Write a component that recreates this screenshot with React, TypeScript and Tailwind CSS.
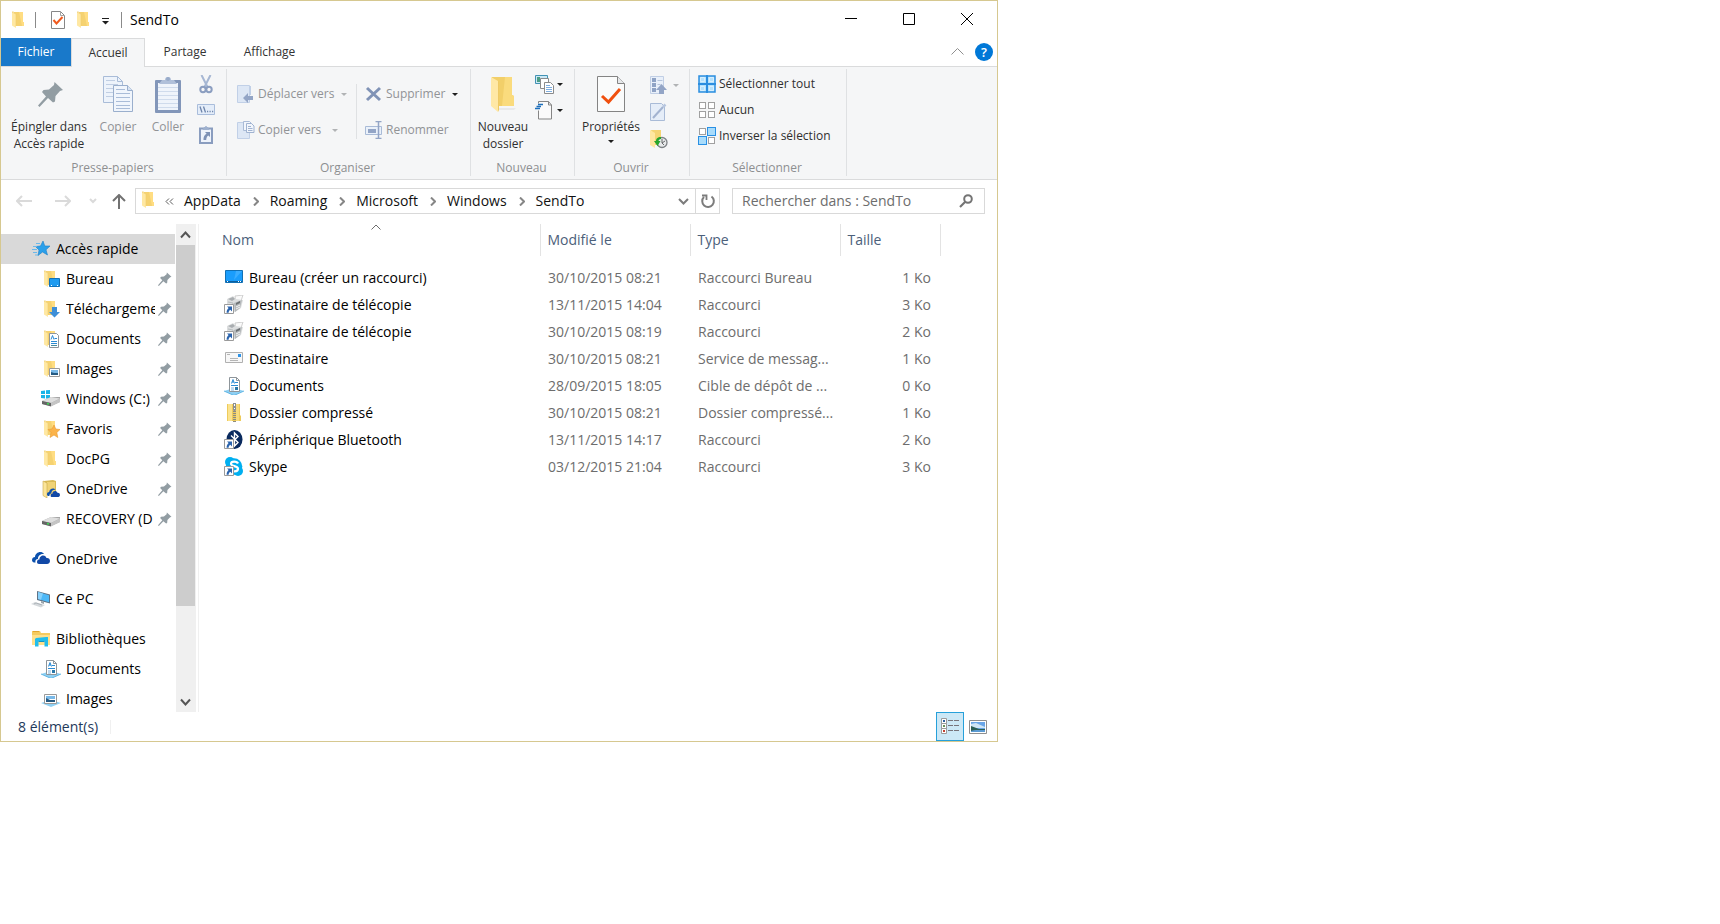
import type { ReactNode } from "react";

type IconProps = { children: ReactNode; w?: number; h?: number };

function Svg({ children, w = 18, h = 18 }: IconProps) {
  return (
    <svg width={w} height={h} viewBox={`0 0 ${w} ${h}`} fill="none" className="block shrink-0" aria-hidden="true">
      {children}
    </svg>
  );
}

/* ---------- shared drawings ---------- */

function FolderShape() {
  return (
    <>
      <path d="M4 1h9v10h1v4H4z" fill="#f5d271" />
      <path d="M9 1h4v10h1v4h-2z" fill="#ffdd82" />
      <path d="M2 1l4 2v14l-4-2.5z" fill="#ffe8a3" />
      <path d="M4 1H2l4 2v12" stroke="#f0cd6c" strokeWidth=".6" />
    </>
  );
}

const Folder = () => <Svg><FolderShape /></Svg>;

const BigFolder = () => (
  <Svg w={28} h={36}>
    <path d="M3 1h20v18l2 1v10H8L3 20z" fill="#f2cf69" />
    <path d="M16 1h7v18l2 1v10H13z" fill="#fadb7d" />
    <path d="M2 1l7 4v31l-7-6z" fill="#ffe8a6" />
    <path d="M9 5l1 1v28l-1 2z" fill="#efca66" />
    <path d="M10 32h17l-2 2H10z" fill="#000" opacity=".05" />
  </Svg>
);

function ShortcutBadge() {
  return (
    <>
      <path d="M.5 9.500h9v9h-9z" fill="#fff" stroke="#9a9a9a" />
      <path d="M3 11.500h5v5l-1.700-1.700c-1 .7-1.600 1.600-1.700 2.900H2.600c0-2 .7-3.400 2-4.600z" fill="#2a63ad" />
    </>
  );
}

function DocumentSheet() {
  return (
    <>
      <path d="M5.500 1.500h7l3 3v11h-10z" fill="#fff" stroke="#8e959a" />
      <path d="M12.500 1.500v3h3" stroke="#8e959a" />
      <path d="M7.500 7.500l1.500-4 1.500 4M8 6h2M11 6.500h3M7 9.500h7" stroke="#2b8bd4" />
      <path d="M7 12h3M7 14h3" stroke="#7fb2dc" />
      <path d="M11 11h3v3h-3z" fill="#2877a8" />
    </>
  );
}

const Pin = ({ size = 14 }: { size?: number }) => (
  <svg width={size} height={size} viewBox="0 0 26 26" className="block shrink-0" aria-hidden="true">
    <path d="M16.500 1l8.500 8-3 1-4.500 5-.5 5.500-2 1-5-4.500L1.500 26 0 24.500 8 15.500 4 11l1.500-2 5.500-.5 5-4.500z" fill="#929da3" />
  </svg>
);

const CheckedSheet = () => (
  <Svg w={16} h={18}>
    <path d="M1.500.5h9l4 4v13h-13z" fill="#fff" stroke="#878787" />
    <path d="M10.500.5v4h4" stroke="#a3a3a3" />
    <path d="M3.500 9l3 3.500 6-6.500" stroke="#f05a1e" strokeWidth="2" />
  </Svg>
);

const BigCheckedSheet = () => (
  <Svg w={28} h={37}>
    <path d="M.5.5h20l7 7v28H.5z" fill="#fafbfb" stroke="#848484" />
    <path d="M20.500.5v7h7" fill="#e6e8ea" stroke="#848484" />
    <path d="M5 20l6.500 6L23 13" stroke="#f0500f" strokeWidth="3" />
  </Svg>
);

const Caret = ({ muted = false }: { muted?: boolean }) => (
  <svg width="6" height="3" viewBox="0 0 6 3" className="block shrink-0" aria-hidden="true">
    <path d="M0 0h6L3 3z" fill={muted ? "#b1b3b5" : "#1e1e1e"} />
  </svg>
);

const Chevron = ({ d, w, h, color, width = 1 }: { d: string; w: number; h: number; color: string; width?: number }) => (
  <Svg w={w} h={h}>
    <path d={d} stroke={color} strokeWidth={width} />
  </Svg>
);

/* ---------- ribbon drawings ---------- */

const CopyPages = () => (
  <Svg w={30} h={36}>
    <path d="M.5.5h14l5 5v21H.5z" fill="#edf3fb" stroke="#a9bcd8" />
    <path d="M14.500.5v5h5" stroke="#a9bcd8" />
    <path d="M3 4.500h9M3 8.500h12M3 12.500h7M3 16.500h7M3 20.500h7" stroke="#c0cee3" />
    <path d="M10.500 9.500h14l5 5v21h-19z" fill="#f0f5fc" stroke="#9aafcd" />
    <path d="M24.500 9.500v5h5" fill="#d8e3f2" stroke="#9aafcd" />
    <path d="M13 13.500h9M13 17.500h14M13 21.500h14M13 25.500h14M13 29.500h14M13 32.500h14" stroke="#a9bcd8" />
  </Svg>
);

const Clipboard = () => (
  <Svg w={26} h={37}>
    <path d="M1 4h24a1 1 0 011 1v31a1 1 0 01-1 1H1a1 1 0 01-1-1V5a1 1 0 011-1z" fill="#8296b9" />
    <path d="M3 7h20v27H3z" fill="#eff4fb" />
    <path d="M3 11.500h20M3 15.500h20M3 19.500h20M3 23.500h20M3 27.500h20M3 31.500h20" stroke="#cfdbec" />
    <path d="M4 8l3-4h3a3 3 0 016 0h3l3 4z" fill="#b0c0da" />
    <circle cx="13" cy="3" r="2" fill="#98abc9" />
  </Svg>
);

const Scissors = () => (
  <Svg w={14} h={19}>
    <path d="M2.500 0L9 13M11.500 0L5 13" stroke="#a6b7d3" strokeWidth="2" />
    <circle cx="4" cy="14.500" r="2.700" stroke="#8b9ec0" strokeWidth="2" />
    <circle cx="10" cy="14.500" r="2.700" stroke="#8b9ec0" strokeWidth="2" />
  </Svg>
);

const PathBox = () => (
  <Svg w={18} h={11}>
    <path d="M.5.5h17v10H.5z" fill="#e4edf9" stroke="#a9bddb" />
    <path d="M3 2.500l2 6M6.500 2.500l2 6" stroke="#6f86ac" strokeWidth="1.300" />
    <path d="M10 7.500h1.200M12.500 7.500h1.200M15 7.500h1.200" stroke="#6f86ac" strokeWidth="1.500" />
  </Svg>
);

const PasteShortcut = () => (
  <Svg w={14} h={19}>
    <path d="M1 3.500h12v14.500H1z" fill="#eef3fb" stroke="#8a9dbf" strokeWidth="2" />
    <path d="M3.500 5L5 2h1a1 1 0 012 0h1l1.500 3z" fill="#9fb1ce" />
    <path d="M6 7h5v5l-1.700-1.600c-1.500 1-2 2.500-2.100 4.600H4.500c-.2-3 .8-5 3.100-6.300z" fill="#7d91b5" />
  </Svg>
);

const MoveTo = () => (
  <Svg>
    <path d="M.5.500h12v17H.5z" fill="#dde7f5" stroke="#c1d0e7" />
    <path d="M13 1v9" stroke="#c1d0e7" strokeWidth="2" />
    <path d="M6 13l5-5v3h5v4h-5v3z" fill="#93a5c6" />
  </Svg>
);

const CopyTo = () => (
  <Svg>
    <path d="M.5 1.500h12v16H.5z" fill="#dde7f5" stroke="#c1d0e7" />
    <path d="M6.500.500h6l2 2v7h-8z" fill="#f2f6fc" stroke="#a9bbd7" />
    <path d="M9.500 2.500h5l2.500 2.500v6.500H9.500z" fill="#f2f6fc" stroke="#a0b3d1" />
    <path d="M11 5.500h3M11 7.500h4.500M11 9.500h4.500" stroke="#a0b3d1" />
  </Svg>
);

const DeleteCross = () => (
  <Svg>
    <path d="M2 3l13 12M15 3L2 15" stroke="#8093b6" strokeWidth="3" />
  </Svg>
);

const Rename = () => (
  <Svg>
    <path d="M.5 5.500h16v8H.5z" fill="#eaf1fa" stroke="#a9bbd7" />
    <path d="M3 8h8v4H3z" fill="#93a5c6" />
    <path d="M13.500 1v16M10.500.500h6M10.500 17.500h6" stroke="#93a5c6" strokeWidth="1.500" />
  </Svg>
);

const NewItem = () => (
  <Svg w={19} h={19}>
    <path d="M.5.500h12v8H.5z" fill="#cce9f6" stroke="#4292b4" />
    <path d="M2 2h3v5H2z" fill="#4d9d84" />
    <path d="M5.500 3.500h8v10h-8z" fill="#fff" stroke="#8b8b8b" />
    <path d="M9.500 7.500h6l3 3v8h-9z" fill="#fff" stroke="#8b8b8b" />
    <path d="M11 10.500h4M11 12.500h6M11 14.500h6M11 16.500h6" stroke="#7eaee0" />
  </Svg>
);

const EasyAccess = () => (
  <Svg w={19} h={19}>
    <path d="M3.500 9.500v8.500h13V4l-3-3.500h-10v2" fill="#fafafa" stroke="#858585" />
    <path d="M13.500.500v3.500h3" stroke="#858585" />
    <path d="M3 3.500h5M1.500 5.500H6M0 7.500h5" stroke="#1e6fbb" strokeWidth="1.300" />
  </Svg>
);

const OpenList = () => (
  <Svg>
    <path d="M.5.500h13v17H.5z" fill="#e9f0fa" stroke="#c1cfe5" />
    <path d="M2 2h4v4H2zM2 7h4v4H2zM2 12h4v4H2z" fill="#8fa3c5" />
    <path d="M7.500 4.500h5M7.500 8.500h3" stroke="#b5c4dc" />
    <path d="M11.500 8l5.500 6h-3v4H9v-4H6z" fill="#93a5c6" />
  </Svg>
);

const EditSheet = () => (
  <Svg>
    <path d="M.5.500h11l3 3v14H.5z" fill="#e5edf8" stroke="#a9bbd7" />
    <path d="M3 15L13 4" stroke="#a3b3d0" strokeWidth="2" />
    <path d="M13 4l2.500-2.500" stroke="#b6c5de" strokeWidth="2.500" />
  </Svg>
);

const History = () => (
  <Svg w={19} h={19}>
    <path d="M1 0h10v15H5z" fill="#f5d473" />
    <path d="M0 0l5 3v15l-5-3z" fill="#ffe7a0" />
    <circle cx="12" cy="12.500" r="5" fill="#e8eaeb" stroke="#7d8285" strokeWidth="1.300" />
    <path d="M12 9v4l3-2M12 13l2 2" stroke="#66696b" />
    <path d="M11 7c-3.500 0-5 2-5 4H4l3.500 5 3-5H8.500c0-1 1-2 2.500-2z" fill="#27a52c" />
  </Svg>
);

function Tile({ x, y, on }: { x: number; y: number; on?: boolean }) {
  return on ? (
    <rect x={x + 0.5} y={y + 0.5} width={8} height={8} fill="#a9dcfb" stroke="#2990e4" />
  ) : (
    <rect x={x + 1.5} y={y + 1.5} width={6} height={6} fill="#fff" stroke="#a0a0a0" />
  );
}

const SelectAll = () => (
  <Svg>
    <path d="M1 1h16v16H1z" fill="#b5e1fc" stroke="#2b8ee0" strokeWidth="1.500" />
    <path d="M9 0v18M0 9h18" stroke="#2b8ee0" strokeWidth="2" />
    <path d="M2.500 2.500h4v4h-4zM11.500 2.500h4v4h-4zM2.500 11.500h4v4h-4zM11.500 11.500h4v4h-4z" stroke="#d7effd" />
  </Svg>
);
const SelectNone = () => (
  <Svg>
    <Tile x={0} y={0} /><Tile x={9} y={0} /><Tile x={0} y={9} /><Tile x={9} y={9} />
  </Svg>
);
const SelectInvert = () => (
  <Svg>
    <Tile x={0} y={0} /><Tile x={9} y={0} on /><Tile x={0} y={9} on /><Tile x={9} y={9} />
  </Svg>
);

/* ---------- navigation and list drawings ---------- */

const QuickStar = () => (
  <Svg>
    <path d="M11 1l1.800 5H18l-4 3.800L15.500 15 10.500 12 6 15.500 7 10 3.500 6.500l5-.5z" fill="#2ba0ea" stroke="#1c7fc8" strokeWidth=".6" />
    <path d="M4 3.500h4M1 6.500h4M0 9.500h5M1 12.500h4M3 15h3" stroke="#6bb9ea" />
  </Svg>
);

const DesktopFolder = () => (
  <Svg>
    <FolderShape />
    <path d="M7.500 8.500h10v8h-10z" fill="#1e9bf0" stroke="#1272b8" />
    <path d="M9 15.500h1M15 15.500h1" stroke="#fff" />
  </Svg>
);
const DownloadFolder = () => (
  <Svg>
    <FolderShape />
    <path d="M10 7h5v5h3l-5.500 5.500L7 12h3z" fill="#3e8fd8" />
  </Svg>
);
const DocumentFolder = () => (
  <Svg>
    <FolderShape />
    <path d="M7.500 3.500h7l2 2v12h-9z" fill="#fff" stroke="#8e959a" />
    <path d="M9 9.500l1.500-4 1.500 4M12.500 8.500H15M9 11.500h6M9 13.500h6" stroke="#2b8bd4" />
    <path d="M9 15.500h6" stroke="#478c9e" />
  </Svg>
);
const ImageFolder = () => (
  <Svg>
    <FolderShape />
    <path d="M7.500 8.500h10v8h-10z" fill="#fff" stroke="#9a9a9a" />
    <path d="M9 10h7v3H9z" fill="#79b9e8" />
    <path d="M9 12l3 1h4v2H9z" fill="#255a82" />
  </Svg>
);
function DriveBody({ y = 0 }: { y?: number }) {
  return (
    <g transform={`translate(0 ${y})`}>
      <path d="M0 5l9-4h9v5l-9 4-9-2z" fill="#a5a5a5" />
      <path d="M0 5l9-4 9 1.500L9 7z" fill="#dedede" />
      <path d="M0 5l9 2v3.500L0 8z" fill="#666" />
      <path d="M9 7l9-4.500V6l-9 4.500z" fill="#c4c4c4" />
      <path d="M5 7.500l2 .5" stroke="#3edb55" strokeWidth="1.500" />
    </g>
  );
}
const WindowsDrive = () => (
  <Svg w={20}>
    <path d="M0 1l4-.5V4H0zM5 .300L9 0v4H5zM0 5h4v3.500L0 8zM5 5h4v4l-4-.5z" fill="#19b5e8" />
    <g transform="translate(1 0)"><DriveBody y={6} /></g>
  </Svg>
);
const Drive = () => <Svg><DriveBody y={6} /></Svg>;
const FavoriteFolder = () => (
  <Svg>
    <FolderShape />
    <path d="M12 5l1.800 4 4.200.500-3.200 3 1 5L12 15l-4 2.500 1-5-3-3 4-.5z" fill="#fbb34a" stroke="#e99a31" strokeWidth=".6" />
  </Svg>
);

function CloudShape() {
  return (
    <>
      <path d="M0 10c0-2 1.500-3 3-3C3 3 9 0 12 4c-4-.5-6 2-6 5-2 0-3 1.500-2.500 3.500H2C1 12.500 0 11.500 0 10z" fill="#0c51ad" />
      <path d="M5 12c0-2 1.300-2.500 2.500-2.500C7 5.500 13 3.500 14.500 8c2-.3 3.500 1 3.500 3s-1.500 3-3 3H7c-1.300 0-2-1-2-2z" fill="#1148a6" />
    </>
  );
}
const CloudFolder = () => (
  <Svg>
    <path d="M2 1l9-1 3 1v14H4z" fill="#d9ba55" />
    <path d="M5 2h8v13H5z" fill="#f0d376" />
    <path d="M1 1l4 2v15l-4-2.500z" fill="#fbe59a" stroke="#c9a84a" strokeWidth=".6" />
    <g transform="translate(5 7) scale(.72)"><CloudShape /></g>
  </Svg>
);
const Cloud = () => <Svg><CloudShape /></Svg>;
const Computer = () => (
  <Svg w={20}>
    <path d="M6 1l13 3.500v9L6 10z" fill="#5f7386" />
    <path d="M7 2l11 3.200v7L7 9z" fill="#4db8f7" />
    <path d="M7 2l5 1.500L10 9.800 7 9z" fill="#86d0fb" />
    <path d="M10 11l3 1v2l-3-1z" fill="#9aa4ab" />
    <path d="M0 14l4-2 10 3-4 2.500z" fill="#d5d9dc" />
    <path d="M3 14l2-1 6 2" stroke="#aeb4b9" />
  </Svg>
);
const Libraries = () => (
  <Svg>
    <path d="M0 1h8l1 2h9v12H0z" fill="#f5cb5f" />
    <path d="M1 1.500h6" stroke="#e4a52f" />
    <path d="M0 5h18v10H0z" fill="#ffe08a" />
    <path d="M4 8l10-1h2v9.500h-3.500V11h-6v5.500H3V9z" fill="#22bdec" />
    <path d="M6.500 11h6v1h-6z" fill="#0d95c6" />
  </Svg>
);
const LibraryDocument = () => (
  <Svg w={20}>
    <path d="M0 14l10-3 10 3-10 4.500z" fill="#8fd0f3" />
    <path d="M0 14l10 4.500L20 14" stroke="#4aa9de" strokeWidth=".8" />
    <g transform="translate(0 -1)"><DocumentSheet /></g>
  </Svg>
);
const LibraryImage = () => (
  <Svg w={20}>
    <path d="M0 13l10-3 10 3-10 4z" fill="#8fd0f3" />
    <path d="M3.500 4.500h12v9h-12z" fill="#fff" stroke="#999" />
    <path d="M5 6h9v3H5z" fill="#79b9e8" />
    <path d="M5 8l4 2h5v2H5z" fill="#255a82" />
  </Svg>
);

const DesktopScreen = () => (
  <Svg w={20} h={19}>
    <path d="M1.500 2.500h17v12h-17z" fill="#1a9dfc" stroke="#1270b4" />
    <path d="M12 3h6l-8 9z" fill="#3badff" />
    <path d="M2 13.500h16" stroke="#0d5f9e" />
    <path d="M3 13.500h1M14 13.500h1M16 13.500h1" stroke="#fff" />
  </Svg>
);
const Fax = () => (
  <Svg w={20} h={19}>
    <path d="M11 1l8-1-2 6-5 2z" fill="#fafafa" stroke="#c4c4c4" strokeWidth=".8" />
    <path d="M3 4l6-3 3 3 7 1-2 8-6 4-8-3z" fill="#dcdedf" />
    <path d="M4 4l5-2 2 2-3 2z" fill="#a9adb0" />
    <path d="M10 8l8-3-2 8-5 4z" fill="#b4b8ba" />
    <path d="M12 8l4-2v2l-4 2z" fill="#6d7173" />
    <path d="M12 12l4-2M12 14l4-2" stroke="#f4f4f4" />
    <path d="M4 7l5 1v3" stroke="#b9bdbf" />
    <ShortcutBadge />
  </Svg>
);
const Envelope = () => (
  <Svg w={20} h={19}>
    <path d="M1.500 3.500h17v10h-17z" fill="#f7f7f7" stroke="#b0b0b0" />
    <path d="M14 5h3v3h-3z" fill="#2e93e8" />
    <path d="M3 5.500h3M6 9.500h8M6 11.500h8" stroke="#b5b5b5" />
  </Svg>
);
const ZipFolder = () => (
  <Svg w={20} h={19}>
    <path d="M3 1h13v11l1 1v5H3z" fill="#eecb5c" />
    <path d="M4 1h4v17H4z" fill="#fbe38f" />
    <path d="M12 1h3v17h-3z" fill="#f8dc7d" />
    <path d="M10.500 0v19" stroke="#8b8b82" strokeWidth="3" strokeDasharray="1 1" />
    <path d="M9 0h3v7l-1.500 1.500L9 7z" fill="#8d9092" />
    <path d="M10.500 1v2M10.500 5v1" stroke="#fff" />
  </Svg>
);
const Bluetooth = () => (
  <Svg w={20} h={19}>
    <ellipse cx="10.500" cy="9.500" rx="8" ry="9.500" fill="#0a2a5e" />
    <path d="M7 5.500l7 7-3.500 3.500V3L14 6.500l-7 7" stroke="#fff" strokeWidth="1.400" />
    <ShortcutBadge />
  </Svg>
);
const Skype = () => (
  <Svg w={20} h={19}>
    <circle cx="10" cy="9.500" r="8.300" fill="#00aff0" />
    <circle cx="6" cy="5" r="5" fill="#00aff0" />
    <circle cx="14" cy="14" r="5" fill="#00aff0" />
    <path d="M14 6.500C13 4 7 3.800 7 6.800c0 3 7 1.700 7 5 0 3.500-6 3-7.500.700" stroke="#fff" strokeWidth="2.200" />
    <ShortcutBadge />
  </Svg>
);

/* ---------- ribbon building blocks ---------- */

function RibbonGroup({ label, className, children }: { label: string; className: string; children: ReactNode }) {
  return (
    <section className={`flex shrink-0 flex-col border-r border-[#dfe1e3] ${className}`}>
      <div className="flex h-[91px] items-start pt-px">{children}</div>
      <h2 className="pr-[2px] text-center text-[12px] leading-4 text-[#8d8f91]">{label}</h2>
    </section>
  );
}

function BigButton({ icon, lines, className, muted, caret }: { icon: ReactNode; lines: string[]; className: string; muted?: boolean; caret?: boolean }) {
  return (
    <button type="button" className={`flex shrink-0 flex-col items-center whitespace-nowrap text-[12px] leading-[17px] ${muted ? "text-[#919396]" : "text-[#2f2f2f]"} ${className}`}>
      <span className="flex h-12 items-center justify-center">{icon}</span>
      {lines.map((line) => <span key={line}>{line}</span>)}
      {caret && <span className="pt-[5px]"><Caret /></span>}
    </button>
  );
}

function SmallButton({ icon, label, muted, caret }: { icon: ReactNode; label: string; muted?: boolean; caret?: ReactNode }) {
  return (
    <button type="button" className={`flex items-center gap-[3px] whitespace-nowrap text-[12px] leading-[18px] ${muted ? "text-[#919396]" : "text-[#2f2f2f]"}`}>
      {icon}
      <span>{label}</span>
      {caret && <span className="ml-1">{caret}</span>}
    </button>
  );
}

function IconButton({ label, icon, caret }: { label: string; icon: ReactNode; caret?: ReactNode }) {
  return (
    <button type="button" aria-label={label} className="flex items-center gap-[3px]">
      {icon}
      {caret}
    </button>
  );
}

/* ---------- data ---------- */

type NavEntry = { label: string; icon: ReactNode; level: 0 | 1; pinned?: boolean; selected?: boolean; spaced?: boolean };

const navEntries: NavEntry[] = [
  { label: "Accès rapide", icon: <QuickStar />, level: 0, selected: true },
  { label: "Bureau", icon: <DesktopFolder />, level: 1, pinned: true },
  { label: "Téléchargements", icon: <DownloadFolder />, level: 1, pinned: true },
  { label: "Documents", icon: <DocumentFolder />, level: 1, pinned: true },
  { label: "Images", icon: <ImageFolder />, level: 1, pinned: true },
  { label: "Windows (C:)", icon: <WindowsDrive />, level: 1, pinned: true },
  { label: "Favoris", icon: <FavoriteFolder />, level: 1, pinned: true },
  { label: "DocPG", icon: <Folder />, level: 1, pinned: true },
  { label: "OneDrive", icon: <CloudFolder />, level: 1, pinned: true },
  { label: "RECOVERY (D", icon: <Drive />, level: 1, pinned: true },
  { label: "OneDrive", icon: <Cloud />, level: 0, spaced: true },
  { label: "Ce PC", icon: <Computer />, level: 0, spaced: true },
  { label: "Bibliothèques", icon: <Libraries />, level: 0, spaced: true },
  { label: "Documents", icon: <LibraryDocument />, level: 1 },
  { label: "Images", icon: <LibraryImage />, level: 1 },
];

const files = [
  { name: "Bureau (créer un raccourci)", icon: <DesktopScreen />, date: "30/10/2015 08:21", type: "Raccourci Bureau", size: "1 Ko" },
  { name: "Destinataire de télécopie", icon: <Fax />, date: "13/11/2015 14:04", type: "Raccourci", size: "3 Ko" },
  { name: "Destinataire de télécopie", icon: <Fax />, date: "30/10/2015 08:19", type: "Raccourci", size: "2 Ko" },
  { name: "Destinataire", icon: <Envelope />, date: "30/10/2015 08:21", type: "Service de messag...", size: "1 Ko" },
  { name: "Documents", icon: <LibraryDocument />, date: "28/09/2015 18:05", type: "Cible de dépôt de ...", size: "0 Ko" },
  { name: "Dossier compressé", icon: <ZipFolder />, date: "30/10/2015 08:21", type: "Dossier compressé...", size: "1 Ko" },
  { name: "Périphérique Bluetooth", icon: <Bluetooth />, date: "13/11/2015 14:17", type: "Raccourci", size: "2 Ko" },
  { name: "Skype", icon: <Skype />, date: "03/12/2015 21:04", type: "Raccourci", size: "3 Ko" },
];

const crumbs = ["AppData", "Roaming", "Microsoft", "Windows", "SendTo"];

/* ---------- window parts ---------- */

function TitleBar() {
  return (
    <header className="flex h-[37px] items-start pr-px">
      <div className="flex h-full flex-1 items-center pl-[9px]">
        <Folder />
        <span className="ml-[7px] h-4 w-px bg-[#8a8a8a]" />
        <button type="button" aria-label="Propriétés" className="ml-[14px]"><CheckedSheet /></button>
        <button type="button" aria-label="Nouveau dossier" className="ml-[9px]"><Folder /></button>
        <button type="button" aria-label="Personnaliser la barre d'outils" className="ml-[9px] mt-1">
          <Svg w={7} h={7}><path d="M0 .500h7" stroke="#1e1e1e" /><path d="M0 3h7L3.500 6.500z" fill="#1e1e1e" /></Svg>
        </button>
        <span className="ml-3 h-4 w-px bg-[#8a8a8a]" />
        <h1 className="ml-2 text-[14px] leading-5 text-black">SendTo</h1>
      </div>
      <button type="button" aria-label="Réduire" className="flex h-9 w-[58px] items-center justify-center">
        <Svg w={12} h={12}><path d="M0 5.500h12" stroke="#000" /></Svg>
      </button>
      <button type="button" aria-label="Agrandir" className="flex h-9 w-[58px] items-center justify-center">
        <Svg w={12} h={12}><path d="M.5.500h11v11H.5z" stroke="#000" /></Svg>
      </button>
      <button type="button" aria-label="Fermer" className="flex h-9 w-[58px] items-center justify-center">
        <Svg w={12} h={12}><path d="M0 0l12 12M12 0L0 12" stroke="#000" /></Svg>
      </button>
    </header>
  );
}

function Tabs() {
  return (
    <div className="flex h-[29px] text-[12px] leading-[18px] text-[#333]">
      <div className="flex w-[70px] border-b border-[#dadbdc]">
        <button type="button" className="flex-1 bg-[#1979ca] text-white">Fichier</button>
      </div>
      <button type="button" className="w-[74px] border-x border-t border-[#dadbdc] bg-[#f5f6f7]">Accueil</button>
      <div className="flex flex-1 items-center border-b border-[#dadbdc]">
        <button type="button" className="w-20">Partage</button>
        <button type="button" className="w-[89px]">Affichage</button>
        <button type="button" aria-label="Réduire le ruban" className="ml-auto mr-[11px]">
          <Chevron d="M.5 6.500l6-6 6 6" w={13} h={8} color="#8f8f8f" />
        </button>
        <button type="button" aria-label="Aide" className="mr-1 flex size-[18px] items-center justify-center rounded-full bg-[#0078d7] text-[13px] font-semibold text-white">?</button>
      </div>
    </div>
  );
}

function Ribbon() {
  return (
    <div className="flex border-b border-[#dadbdc] bg-[#f5f6f7] pb-[3px] pt-[2px]">
      <RibbonGroup label="Presse-papiers" className="w-[226px]">
        <BigButton icon={<span className="pl-[3px]"><Pin size={26} /></span>} lines={["Épingler dans", "Accès rapide"]} className="ml-2 w-20" />
        <BigButton icon={<CopyPages />} lines={["Copier"]} className="ml-[5px] w-12" muted />
        <BigButton icon={<Clipboard />} lines={["Coller"]} className="ml-[2px] w-12" muted />
        <div className="ml-1 flex w-5 flex-col items-center gap-[10px] pt-[5px]">
          <IconButton label="Couper" icon={<Scissors />} />
          <IconButton label="Copier le chemin d'accès" icon={<PathBox />} />
          <IconButton label="Coller le raccourci" icon={<PasteShortcut />} />
        </div>
      </RibbonGroup>
      <RibbonGroup label="Organiser" className="w-[244px]">
        <div className="ml-[10px] flex w-[119px] flex-col gap-[18px] pt-[15px]">
          <SmallButton icon={<MoveTo />} label="Déplacer vers" muted caret={<Caret muted />} />
          <SmallButton icon={<CopyTo />} label="Copier vers" muted caret={<span className="block pl-1"><Caret muted /></span>} />
        </div>
        <div className="mt-[14px] h-[55px] w-px bg-[#dfe1e3]" />
        <div className="ml-2 flex flex-col gap-[18px] pt-[15px]">
          <SmallButton icon={<DeleteCross />} label="Supprimer" muted caret={<Caret />} />
          <SmallButton icon={<Rename />} label="Renommer" muted />
        </div>
      </RibbonGroup>
      <RibbonGroup label="Nouveau" className="w-[104px]">
        <BigButton icon={<BigFolder />} lines={["Nouveau", "dossier"]} className="ml-1 w-14" />
        <div className="ml-1 flex flex-col gap-[7px] pt-[5px]">
          <IconButton label="Nouvel élément" icon={<NewItem />} caret={<Caret />} />
          <IconButton label="Accès facile" icon={<EasyAccess />} caret={<Caret />} />
        </div>
      </RibbonGroup>
      <RibbonGroup label="Ouvrir" className="w-[115px]">
        <BigButton icon={<BigCheckedSheet />} lines={["Propriétés"]} className="ml-1 w-16" caret />
        <div className="ml-[7px] flex flex-col gap-[9px] pt-[6px]">
          <IconButton label="Ouvrir" icon={<OpenList />} caret={<span className="pl-[2px]"><Caret muted /></span>} />
          <IconButton label="Modifier" icon={<EditSheet />} />
          <IconButton label="Historique" icon={<History />} />
        </div>
      </RibbonGroup>
      <RibbonGroup label="Sélectionner" className="w-[157px]">
        <div className="ml-2 flex flex-col gap-2 pt-[5px]">
          <SmallButton icon={<SelectAll />} label="Sélectionner tout" />
          <SmallButton icon={<SelectNone />} label="Aucun" />
          <SmallButton icon={<SelectInvert />} label="Inverser la sélection" />
        </div>
      </RibbonGroup>
    </div>
  );
}

function AddressRow() {
  return (
    <div className="flex h-11 items-center pb-[2px] pr-3">
      <div className="flex w-[134px] shrink-0 items-center pl-[15px]">
        <button type="button" aria-label="Précédent"><Chevron d="M16 6H1M6 1L1 6l5 5" w={16} h={12} color="#dadada" width={2} /></button>
        <button type="button" aria-label="Suivant" className="ml-[23px]"><Chevron d="M0 6h15M10 1l5 5-5 5" w={16} h={12} color="#dadada" width={2} /></button>
        <button type="button" aria-label="Emplacements récents" className="ml-[18px]"><Chevron d="M1 1l3 3 3-3" w={8} h={6} color="#dadada" width={2} /></button>
        <button type="button" aria-label="Dossier parent" className="ml-[15px]"><Chevron d="M7 15V1M1 7l6-6 6 6" w={14} h={15} color="#727272" width={2} /></button>
      </div>
      <div className="flex h-[26px] flex-1 items-center border border-[#d9d9d9] pl-1 text-[14px] leading-5 text-[#111]">
        <span className="mb-[2px]"><Folder /></span>
        <span className="ml-[7px] mr-[10px]"><Chevron d="M4 .500l-3 3 3 3M8 .500l-3 3 3 3" w={9} h={7} color="#5c5c5c" /></span>
        {crumbs.map((crumb, index) => (
          <span key={crumb} className="flex items-center">
            {index > 0 && (
              <span className="ml-3 mr-[11px]"><Chevron d="M1 .500l4 4-4 4" w={6} h={9} color="#868686" width={2} /></span>
            )}
            <a href="#">{crumb}</a>
          </span>
        ))}
        <button type="button" aria-label="Emplacements précédents" className="ml-auto mr-[6px]">
          <Chevron d="M1 1l4.500 4.500L10 1" w={11} h={7} color="#7c7c7c" width={2} />
        </button>
        <button type="button" aria-label="Actualiser" className="flex h-full w-6 items-center justify-center border-l border-[#d9d9d9]">
          <Svg w={16} h={16}>
            <path d="M4 4A5.800 5.800 0 1 0 11.500 3.500" stroke="#7c7c7c" strokeWidth="2" />
            <path d="M2 2.500h4.500v4.500" stroke="#7c7c7c" strokeWidth="1.800" />
          </Svg>
        </button>
      </div>
      <label className="ml-3 flex h-[26px] w-[253px] items-center border border-[#d9d9d9] pl-[9px] pr-[11px]">
        <input type="search" placeholder="Rechercher dans : SendTo" aria-label="Rechercher dans : SendTo" className="min-w-0 flex-1 bg-transparent text-[14px] leading-5 outline-none placeholder:text-[#6d6d6d]" />
        <Svg w={14} h={14}>
          <circle cx="9" cy="5" r="3.800" stroke="#747474" strokeWidth="2" />
          <path d="M6.500 7.500L1 13" stroke="#747474" strokeWidth="2.200" />
        </Svg>
      </label>
    </div>
  );
}

function Navigation() {
  return (
    <nav className="flex w-[198px] shrink-0 border-r border-[#f0f0f0]">
      <ul className="-mb-[2px] w-[174px] pt-[10px] text-[14px] leading-5 text-black">
        {navEntries.map((entry, index) => (
          <li key={index} className={entry.spaced ? "pt-[10px]" : ""}>
            <a href="#" className={`flex h-[30px] items-center gap-[6px] pr-[3px] ${entry.level ? "pl-[41px]" : "pl-[31px]"} ${entry.selected ? "bg-[#d9d9d9]" : ""}`}>
              <span className="flex w-[18px] shrink-0 justify-center">{entry.icon}</span>
              <span className="min-w-0 flex-1 overflow-hidden whitespace-nowrap">{entry.label}</span>
              {entry.pinned && <span className="-ml-[3px]"><Pin /></span>}
            </a>
          </li>
        ))}
      </ul>
      <div className="ml-px flex w-5 flex-col bg-[#f0f0f0]">
        <button type="button" aria-label="Défiler vers le haut" className="flex h-[21px] items-center justify-center pr-px">
          <Chevron d="M1 6.500l4.500-5 4.500 5" w={11} h={8} color="#555" width={2} />
        </button>
        <div className="mr-px h-[361px] bg-[#cdcdcd]" />
        <button type="button" aria-label="Défiler vers le bas" className="mt-auto flex h-[21px] items-center justify-center pr-px">
          <Chevron d="M1 1.500l4.500 5 4.500-5" w={11} h={8} color="#555" width={2} />
        </button>
      </div>
    </nav>
  );
}

function FileList() {
  return (
    <main className="min-w-0 flex-1 pl-[14px]">
      <table className="table-fixed border-collapse text-left text-[14px] leading-5">
        <colgroup>
          <col className="w-[327px]" />
          <col className="w-[150px]" />
          <col className="w-[150px]" />
          <col className="w-[100px]" />
        </colgroup>
        <thead className="text-[#4c607a]">
          <tr className="h-8">
            <th scope="col" className="relative border-r border-[#e3e3e3] pl-[9px] font-normal">
              Nom
              <span className="absolute inset-x-0 top-0 flex justify-center"><Chevron d="M.5 5.500l4.500-4.500 4.500 4.500" w={10} h={6} color="#6d6d6d" /></span>
            </th>
            <th scope="col" className="border-r border-[#e3e3e3] pl-[7px] font-normal">Modifié le</th>
            <th scope="col" className="border-r border-[#e3e3e3] pl-[7px] font-normal">Type</th>
            <th scope="col" className="border-r border-[#e3e3e3] pl-[7px] font-normal">Taille</th>
          </tr>
        </thead>
        <tbody className="text-[#6d6d6d] before:block before:h-2">
          {files.map((file, index) => (
            <tr key={index} className="h-[27px]">
              <td className="pl-[11px]">
                <span className="flex items-center gap-[5px] whitespace-nowrap text-black">
                  {file.icon}
                  {file.name}
                </span>
              </td>
              <td className="whitespace-nowrap pl-2">{file.date}</td>
              <td className="whitespace-nowrap pl-2">{file.type}</td>
              <td className="whitespace-nowrap pr-[9px] text-right">{file.size}</td>
            </tr>
          ))}
        </tbody>
      </table>
    </main>
  );
}

function StatusBar() {
  return (
    <footer className="flex h-[29px] items-center pl-[17px] text-[14px] leading-5 text-[#1e395b]">
      <span>8 élément(s)</span>
      <span className="ml-3 h-[14px] w-px bg-[#f0f0f0]" />
      <button type="button" aria-label="Détails" className="ml-auto flex h-full w-7 items-center justify-center border border-[#26a0da] bg-[#cce8f6]">
        <Svg w={18} h={17}>
          <path d="M.5.500h5v5h-5zM.5 5.500h5v5h-5zM.5 10.500h5v5h-5z" fill="#fff" stroke="#9b9b9b" />
          <path d="M2 3h2" stroke="#2c5f9e" strokeWidth="2" />
          <path d="M2 8h2" stroke="#68935c" strokeWidth="2" />
          <path d="M2 13h2" stroke="#c33f2f" strokeWidth="2" />
          <path d="M7 2.500h5M13 2.500h5M7 7.500h5M13 7.500h5M7 12.500h5M13 12.500h5" stroke="#77737a" />
        </Svg>
      </button>
      <button type="button" aria-label="Grandes icônes" className="ml-[5px] mr-[10px]">
        <Svg w={18} h={14}>
          <path d="M.5.500h17v13H.5z" fill="#fff" stroke="#8f8f8f" />
          <path d="M2 2h14v10H2z" fill="#6aa6e8" />
          <path d="M2 4l5-1 9 4v1H2z" fill="#cfe6f6" />
          <path d="M2 6l8 3h6v1H8L2 11z" fill="#2c5f55" />
          <path d="M2 11l7-1h7v2H2z" fill="#5b9bd3" />
        </Svg>
      </button>
    </footer>
  );
}

export default function App() {
  return (
    <div className="min-h-screen bg-white font-['Open_Sans','Noto_Sans',sans-serif]">
      <div className="flex w-full max-w-[998px] flex-col border border-[#d6c890] bg-white">
        <TitleBar />
        <Tabs />
        <Ribbon />
        <AddressRow />
        <div className="flex">
          <Navigation />
          <FileList />
        </div>
        <StatusBar />
      </div>
    </div>
  );
}
